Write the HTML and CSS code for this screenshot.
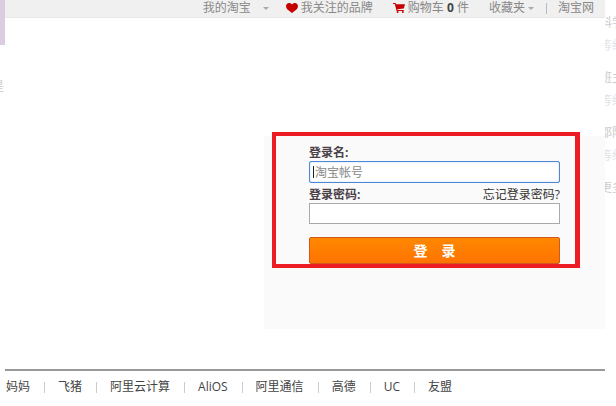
FILE: index.html
```html
<!DOCTYPE html>
<html lang="zh-CN">
    <head>
        <meta charset="UTF-8" />
        <meta name="viewport" content="width=device-width, initial-scale=1.0" />
        <title>淘宝网 - 登录</title>
        <link rel="stylesheet" href="styles.css">
    </head>
    <body>
        <aside class="side side-left">
            <div class="side-block"></div>
            <p>是</p>
        </aside>

        <div class="page">
            <nav class="topbar">
                <a href="#" class="menu menu-mine">我的淘宝 <i class="arrow"></i></a>
                <a href="#" class="menu menu-brand">
                    <svg class="icon" width="12" height="10" viewBox="0 0 12 10">
                        <path fill="#c40000" d="M6 10C4.500 8.600 0 6.300 0 3.200 0 1.300 1.300 0 3 0c1.300 0 2.400.700 3 1.600C6.600.700 7.700 0 9 0c1.700 0 3 1.300 3 3.200C12 6.300 7.500 8.600 6 10z" />
                    </svg>
                    我关注的品牌
                </a>
                <a href="#" class="menu menu-cart">
                    <svg class="icon" width="12" height="10" viewBox="0 0 12 10">
                        <path fill="#c40000" d="M0 0h2.600l.500 1.300H12L10.800 5.500 4.300 6.200l.200.800h6.300v1H3.600L1.800 1H0z" />
                        <circle fill="#c40000" cx="4.600" cy="9" r="1" />
                        <circle fill="#c40000" cx="9.800" cy="9" r="1" />
                    </svg>
                    <span>购物车 <b>0</b> 件</span>
                </a>
                <a href="#" class="menu menu-fav">收藏夹 <i class="arrow"></i></a>
                <a href="#" class="menu menu-home">淘宝网</a>
            </nav>

            <main class="content">
                <form class="login" onsubmit="return false">
                    <label class="label" for="username">登录名:</label>
                    <div class="field">
                        <input class="input input-active" type="text" id="username" placeholder="淘宝帐号" />
                        <span class="caret"></span>
                    </div>
                    <div class="label-row">
                        <label class="label" for="password">登录密码:</label>
                        <a href="#" class="forgot">忘记登录密码?</a>
                    </div>
                    <input class="input" type="password" id="password" />
                    <button type="submit" class="submit">登　录</button>
                    <div class="highlight"></div>
                </form>
            </main>

            <footer class="footer">
                <a href="#">妈妈</a>
                <a href="#">飞猪</a>
                <a href="#">阿里云计算</a>
                <a href="#">AliOS</a>
                <a href="#">阿里通信</a>
                <a href="#">高德</a>
                <a href="#">UC</a>
                <a href="#">友盟</a>
            </footer>
        </div>

        <aside class="side side-right">
            <p>科学</p>
            <p class="sub">等级</p>
            <p>班主</p>
            <p class="sub">等级</p>
            <p>邵阳</p>
            <p class="sub">等级</p>
            <p>更多</p>
        </aside>
    </body>
</html>
```

FILE: styles.css
```css
* {
    box-sizing: border-box;
}

body {
    margin: 0;
    display: flex;
    min-height: 100vh;
    background-color: #fff;
    font-family: "Open Sans", "Noto Sans CJK SC", sans-serif;
    font-size: 12px;
    line-height: 16px;
    overflow: hidden;
}

a {
    color: inherit;
    text-decoration: none;
}

.page {
    flex: 1;
    min-width: 0;
}

/* Strips left and right of the page */
.side {
    overflow: hidden;
    white-space: nowrap;
    color: #ccc;
}

.side p {
    margin: 0;
}

.side-left {
    width: 5px;
}

.side-left p {
    margin-top: 34px;
    text-indent: -8px;
}

.side-block {
    height: 45px;
    background-color: #dccce0;
}

.side-right {
    width: 11px;
    padding-top: 15px;
}

.side-right p {
    margin-bottom: 7px;
    text-indent: -5px;
}

.side-right .sub {
    margin-bottom: 16px;
    color: #e2e4ea;
}

/* Top bar */
.topbar {
    display: flex;
    justify-content: flex-end;
    height: 18px;
    padding-right: 11px;
    background-color: #f0f0f0;
    border-bottom: 1px solid #e8e8e8;
    color: #888;
}

.menu {
    display: flex;
    align-items: center;
    gap: 3px;
    height: 16px;
    white-space: nowrap;
}

.menu-mine {
    gap: 12px;
    margin-right: 17px;
}

.menu-brand,
.menu-cart {
    margin-right: 20px;
}

.menu-fav {
    margin-right: 12px;
}

.menu-home::before {
    content: "";
    width: 1px;
    height: 11px;
    margin-right: 8px;
    background-color: #bbb;
}

.menu b {
    color: #444;
}

.arrow {
    border: 3px solid transparent;
    border-top-color: #aaa;
    border-bottom: 0;
}

/* Login form */
.content {
    display: flex;
    justify-content: flex-end;
    padding: 118px 0 40px;
}

.login {
    position: relative;
    width: 341px;
    padding: 9px 45px 65px;
    background-color: #fafafa;
    color: #333;
}

.label {
    display: block;
    font-weight: bold;
    color: #4a4048;
}

.label-row {
    display: flex;
    justify-content: space-between;
    margin-top: 4px;
}

.field {
    position: relative;
}

.input {
    display: block;
    width: 100%;
    height: 21px;
    padding: 0 5px;
    border: 1px solid #aaa;
    background-color: #fff;
    font: inherit;
    outline: none;
}

.input-active {
    height: 22px;
    border: 1px solid #4d87d6;
    border-radius: 2px;
    box-shadow: inset 0 0 1px #4d87d6;
}

.input::placeholder {
    color: #888;
    opacity: 1;
}

.caret {
    position: absolute;
    top: 5px;
    left: 4px;
    width: 1px;
    height: 12px;
    background-color: #222;
}

.submit {
    display: block;
    width: 100%;
    height: 27px;
    margin-top: 13px;
    padding: 0;
    border: 1px solid #d2571a;
    border-radius: 2px;
    background: linear-gradient(#ff8800, #ff7300);
    color: #fff;
    font: bold 14px/25px "Open Sans", "Noto Sans CJK SC", sans-serif;
    cursor: pointer;
}

.highlight {
    position: absolute;
    top: -4px;
    right: 25px;
    bottom: 61px;
    left: 8px;
    border: 4px solid #ed1c24;
    border-right-width: 5px;
    pointer-events: none;
}

/* Footer links */
.footer {
    display: flex;
    padding: 8px 0 0 1px;
    border-top: 2px solid #999;
    color: #444;
    white-space: nowrap;
}

.footer a {
    display: flex;
    align-items: center;
}

.footer a + a::before {
    content: "";
    width: 1px;
    height: 11px;
    margin: 0 13px 0 14px;
    background-color: #ccc;
}
```
